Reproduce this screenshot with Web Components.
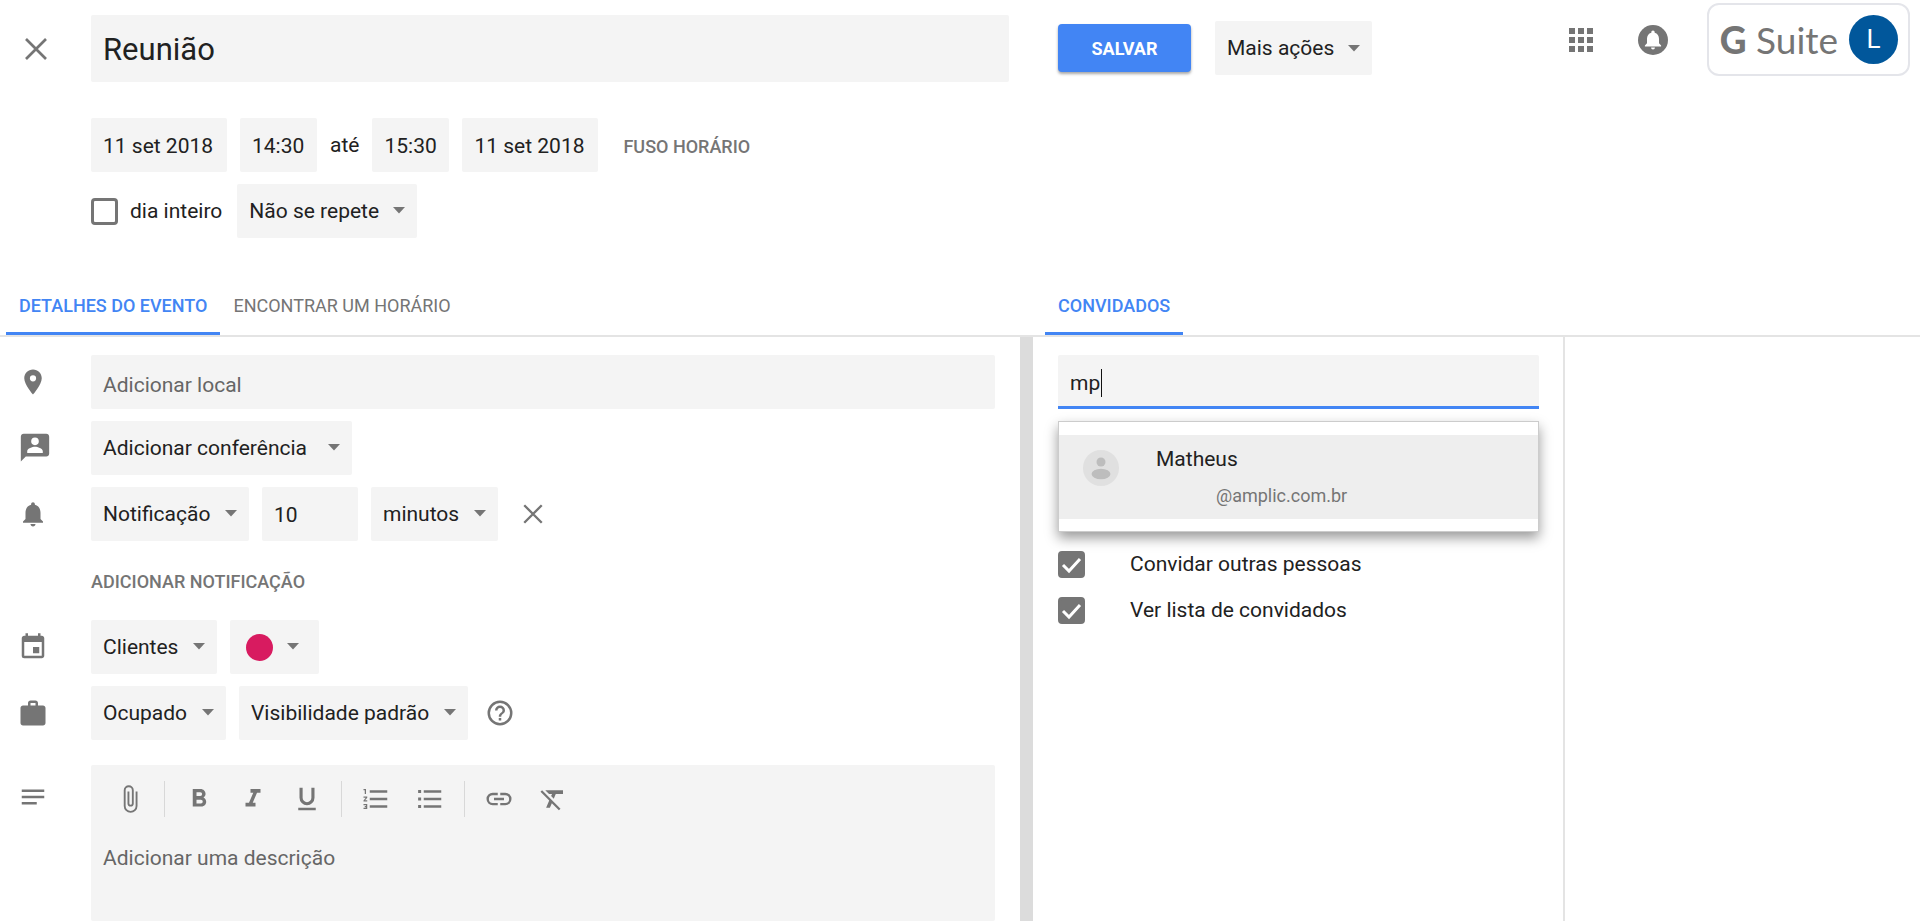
<!DOCTYPE html>
<html lang="pt-BR">
<head>
  <meta charset="UTF-8">
  <meta name="viewport" content="width=device-width, initial-scale=1.0">
  <title>Reunião</title>
  <style>
    :root {
      --blue: #4285f4;
      --field: #f4f4f4;
      --line: #e4e4e4;
      --gray: #757575;
      --ink: #212121;
    }
    body {
      margin: 0;
      background: #fff;
      color: var(--ink);
      font: 21px/28px Roboto, "Liberation Sans", sans-serif;
    }
  </style>
</head>
<body>
  <event-editor></event-editor>

  <template id="header-template">
    <style>
      :host { display: grid; grid-template-columns: 17fr 15fr; align-items: start; }
      .title { display: flex; align-items: center; padding: 15px 11px 0 20px; }
      .title cal-field { flex: 1; margin-left: 39px; --height: 67px; --size: 31px; }
      .right { display: flex; align-items: flex-start; padding: 3px 10px 0 38px; }
      .actions { display: flex; align-items: center; gap: 24px; padding-top: 18px; }
      .save {
        width: 133px; height: 48px; border: 0; border-radius: 4px; padding: 2px 0 0;
        background: var(--blue); color: #fff;
        font: 700 18px/24px Roboto, sans-serif;
        box-shadow: 0 2px 3px rgba(0, 0, 0, .35);
      }
      .more {
        display: flex; align-items: center; gap: 14px; height: 54px; padding: 0 12px;
        border: 0; border-radius: 2px; background: var(--field); color: inherit; font: inherit;
      }
      .account { display: flex; align-items: center; margin-left: auto; }
      .badge {
        display: flex; align-items: center; gap: 11px; box-sizing: border-box;
        height: 73px; margin-left: 36px; padding: 0 10px 0 11px;
        border: 2px solid #e4e5ea; border-radius: 12px;
      }
      .brand { color: var(--gray); font: 37px/44px Lato, sans-serif; white-space: nowrap; }
      .brand b { font-weight: 900; }
      .user {
        width: 49px; height: 49px; border: 0; border-radius: 50%; padding: 0;
        background: #01579b; color: #fff; font: 26px/49px Roboto, sans-serif;
      }
      .bell { margin-left: 36px; }
    </style>
    <div class="title">
      <icon-button icon="close" label="Fechar" style="--icon: 32px"></icon-button>
      <cal-field label="Título" value="Reunião"></cal-field>
    </div>
    <div class="right">
      <div class="actions">
        <button class="save">SALVAR</button>
        <button class="more">Mais ações <cal-icon name="arrow" style="--icon: 12px"></cal-icon></button>
      </div>
      <div class="account">
        <icon-button icon="apps" label="Apps" style="--icon: 36px"></icon-button>
        <icon-button class="bell" icon="alerts" label="Alertas" style="--icon: 36px"></icon-button>
        <div class="badge">
          <span class="brand"><b>G</b> Suite</span>
          <button class="user" aria-label="Conta">L</button>
        </div>
      </div>
    </div>
  </template>

  <template id="when-template">
    <style>
      :host { display: flex; flex-direction: column; gap: 12px; padding: 36px 0 40px 91px; }
      .row { display: flex; align-items: center; gap: 13px; }
      .repeat { gap: 15px; }
      .date { width: 136px; }
      .time { width: 77px; }
      text-button { margin-left: 12px; }
    </style>
    <div class="row">
      <cal-field class="date" label="Data de início" value="11 set 2018"></cal-field>
      <cal-field class="time" label="Hora de início" value="14:30"></cal-field>
      <span>até</span>
      <cal-field class="time" label="Hora de término" value="15:30"></cal-field>
      <cal-field class="date" label="Data de término" value="11 set 2018"></cal-field>
      <text-button>FUSO HORÁRIO</text-button>
    </div>
    <div class="row repeat">
      <cal-check>dia inteiro</cal-check>
      <cal-select label="Repetição" value="Não se repete"></cal-select>
    </div>
  </template>

  <template id="details-template">
    <style>
      :host { display: flex; flex-direction: column; gap: 12px; box-sizing: border-box; padding: 18px 25px 0 18px; }
      .row { display: grid; grid-template-columns: 30px 1fr; column-gap: 43px; align-items: center; min-height: 54px; }
      .row > div { display: flex; align-items: center; gap: 13px; }
      cal-field { flex: 1; }
      cal-field.place { --drop: 6px; }
      cal-field.count { flex: none; width: 96px; }
      .add { min-height: 55px; }
      .add text-button { grid-column: 2; }
      .description { flex: 1; align-items: stretch; margin-top: 13px; }
      .description > cal-icon { margin-top: 17px; }
      .remove { margin-left: 8px; }
    </style>
    <div class="row">
      <cal-icon name="place"></cal-icon>
      <cal-field class="place" label="Local" placeholder="Adicionar local"></cal-field>
    </div>
    <div class="row">
      <cal-icon name="person" style="--icon: 34px"></cal-icon>
      <div><cal-select label="Conferência" value="Adicionar conferência" style="--gap: 20px"></cal-select></div>
    </div>
    <div class="row">
      <cal-icon name="bell"></cal-icon>
      <div>
        <cal-select label="Tipo de aviso" value="Notificação"></cal-select>
        <cal-field class="count" label="Quantidade" value="10"></cal-field>
        <cal-select label="Unidade" value="minutos"></cal-select>
        <icon-button class="remove" icon="close" label="Remover notificação" style="--icon: 28px"></icon-button>
      </div>
    </div>
    <div class="row add"><text-button>ADICIONAR NOTIFICAÇÃO</text-button></div>
    <div class="row">
      <cal-icon name="calendar"></cal-icon>
      <div>
        <cal-select label="Agenda" value="Clientes"></cal-select>
        <color-picker></color-picker>
      </div>
    </div>
    <div class="row">
      <cal-icon name="bag"></cal-icon>
      <div>
        <cal-select label="Disponibilidade" value="Ocupado"></cal-select>
        <cal-select label="Visibilidade" value="Visibilidade padrão"></cal-select>
        <icon-button icon="help" label="Ajuda" style="--icon: 30px; margin-left: 4px"></icon-button>
      </div>
    </div>
    <div class="row description">
      <cal-icon name="notes"></cal-icon>
      <rich-editor></rich-editor>
    </div>
  </template>

  <template id="editor-template">
    <style>
      :host { display: flex; flex-direction: column; flex: 1; background: var(--field); border-radius: 2px; }
      .tools { display: flex; align-items: center; height: 68px; padding-left: 12px; }
      icon-button { width: 54px; }
      hr { width: 1px; height: 36px; margin: 0 7px; border: 0; background: #d8d8d8; }
      textarea {
        flex: 1; min-height: 40px; padding: 11px 12px; border: 0; outline: 0; resize: none;
        background: none; color: inherit; font: inherit; overflow: hidden;
      }
      textarea::placeholder { color: #666; }
    </style>
    <div class="tools" role="toolbar" aria-label="Formatação">
      <icon-button icon="clip" label="Anexar"></icon-button>
      <hr>
      <icon-button icon="bold" label="Negrito"></icon-button>
      <icon-button icon="italic" label="Itálico"></icon-button>
      <icon-button icon="underline" label="Sublinhado"></icon-button>
      <hr>
      <icon-button icon="numbers" label="Lista numerada"></icon-button>
      <icon-button icon="bullets" label="Lista com marcadores"></icon-button>
      <hr>
      <icon-button icon="link" label="Link"></icon-button>
      <icon-button icon="clear" label="Remover formatação"></icon-button>
    </div>
    <textarea aria-label="Descrição" placeholder="Adicionar uma descrição"></textarea>
  </template>

  <template id="guests-template">
    <style>
      :host { display: block; box-sizing: border-box; padding: 18px 24px 0 25px; border-right: 2px solid var(--line); }
      .search { position: relative; }
      input {
        display: block; box-sizing: border-box; width: 100%; height: 54px; padding: 4px 12px 0;
        border: 0; border-bottom: 3px solid var(--blue); border-radius: 2px 2px 0 0; outline: 0;
        background: var(--field); color: inherit; font: inherit; caret-color: transparent;
      }
      .caret { position: absolute; left: 43px; top: 14px; width: 1px; height: 28px; background: #111; }
      ul {
        margin: 12px 0 0; padding: 13px 0 12px; list-style: none;
        border: 1px solid #ccc; background: #fff; box-shadow: 0 6px 12px rgba(0, 0, 0, .4);
      }
      li { display: flex; gap: 37px; height: 84px; padding: 0 24px; background: #eee; }
      li cal-icon { --icon: 36px; align-self: flex-start; margin-top: 15px; }
      p { margin: 10px 0 0; }
      .mail { margin-top: 9px; padding-left: 60px; color: var(--gray); font-size: 18px; }
      .options { display: flex; flex-direction: column; gap: 18px; margin-top: 18px; }
      cal-check { --gap: 45px; }
    </style>
    <div class="search">
      <input aria-label="Adicionar convidados" value="mp">
      <span class="caret"></span>
    </div>
    <ul>
      <li>
        <cal-icon name="avatar"></cal-icon>
        <div>
          <p>Matheus</p>
          <p class="mail">@amplic.com.br</p>
        </div>
      </li>
    </ul>
    <div class="options">
      <cal-check checked>Convidar outras pessoas</cal-check>
      <cal-check checked>Ver lista de convidados</cal-check>
    </div>
  </template>

  <template id="page-template">
    <style>
      :host { display: flex; flex-direction: column; min-height: 100vh; }
      .tabs { display: grid; grid-template-columns: 17fr 15fr; border-bottom: 2px solid var(--line); }
      .tabs div { display: flex; padding-left: 6px; }
      .tabs .guests { padding-left: 25px; }
      .body { flex: 1; display: grid; grid-template-columns: 17fr 15fr; }
      .side { display: grid; grid-template-columns: 3fr 2fr; border-left: 13px solid #dcdcdc; }
    </style>
    <event-header></event-header>
    <event-when></event-when>
    <div class="tabs">
      <div role="tablist">
        <cal-tab selected>DETALHES DO EVENTO</cal-tab>
        <cal-tab>ENCONTRAR UM HORÁRIO</cal-tab>
      </div>
      <div class="guests" role="tablist"><cal-tab selected>CONVIDADOS</cal-tab></div>
    </div>
    <div class="body">
      <event-details></event-details>
      <div class="side"><guest-panel></guest-panel></div>
    </div>
  </template>

  <script>
    // every icon is drawn on a 24x24 grid
    const icons = {
      close: '<path d="M4.5 4.5l15 15m0-15l-15 15" fill="none" stroke="currentColor" stroke-width="2"/>',
      arrow: '<path d="M0 6h24L12 19z"/>',
      apps: '<path d="M4 4h4v4H4zm6 0h4v4h-4zm6 0h4v4h-4zM4 10h4v4H4zm6 0h4v4h-4zm6 0h4v4h-4zM4 16h4v4H4zm6 0h4v4h-4zm6 0h4v4h-4z"/>',
      alerts: '<circle cx="12" cy="12" r="10"/><path fill="#fff" d="M12 5.6c-.7 0-1.1.5-1.1 1.1v.4C9 7.600 8 9.200 8 11.200v3L6.600 15.600v.7h10.800v-.7L16 14.200v-3c0-2-1-3.600-2.900-4.100v-.4c0-.6-.4-1.100-1.100-1.100zM10.700 17a1.300 1.300 0 0 0 2.600 0z"/>',
      place: '<path d="M12 2C8.130 2 5 5.130 5 9c0 5.250 7 13 7 13s7-7.750 7-13c0-3.870-3.130-7-7-7zm0 9.500a2.500 2.500 0 0 1 0-5 2.500 2.500 0 0 1 0 5z"/>',
      person: '<path d="M20 2H4c-1.100 0-2 .9-2 2v17.500L5.500 18H20c1.100 0 2-.9 2-2V4c0-1.100-.9-2-2-2zm-8 2.600a2.700 2.700 0 1 1 0 5.400 2.700 2.700 0 0 1 0-5.400zM17.500 15.500h-11v-1.200c0-2 3.700-3.100 5.500-3.100s5.500 1.100 5.500 3.100z"/>',
      bell: '<path d="M12 22c1.100 0 2-.9 2-2h-4c0 1.100.9 2 2 2zm6-6v-5c0-3.070-1.640-5.640-4.500-6.320V4c0-.83-.67-1.500-1.500-1.500s-1.500.67-1.500 1.500v.68C7.630 5.360 6 7.920 6 11v5l-2 2v1h16v-1z"/>',
      calendar: '<path d="M17 12h-5v5h5zM16 1v2H8V1H6v2H5c-1.110 0-2 .9-2 2v14a2 2 0 0 0 2 2h14c1.100 0 2-.9 2-2V5c0-1.100-.9-2-2-2h-1V1zm3 18H5V8h14z"/>',
      bag: '<path d="M20 6h-4V4c0-1.110-.89-2-2-2h-4c-1.110 0-2 .89-2 2v2H4c-1.110 0-2 .89-2 2v12c0 1.110.89 2 2 2h16c1.110 0 2-.89 2-2V8c0-1.110-.89-2-2-2zm-6 0h-4V4h4z"/>',
      notes: '<path d="M3 6h18v2H3zm0 5h18v2H3zM3 16h12v2H3z"/>',
      help: '<path d="M11 18h2v-2h-2zm1-16a10 10 0 1 0 0 20 10 10 0 0 0 0-20zm0 18a8 8 0 1 1 0-16 8 8 0 0 1 0 16zm0-14a4 4 0 0 0-4 4h2a2 2 0 1 1 4 0c0 2-3 1.750-3 5h2c0-2.250 3-2.500 3-5a4 4 0 0 0-4-4z"/>',
      clip: '<path d="M16.500 6v11.500a4 4 0 0 1-8 0V5a2.500 2.500 0 0 1 5 0v10.500a1 1 0 0 1-2 0V6H10v9.500a2.500 2.500 0 0 0 5 0V5a4 4 0 0 0-8 0v12.500a5.500 5.500 0 0 0 11 0V6z"/>',
      bold: '<path d="M15.600 10.790c.97-.67 1.650-1.770 1.650-2.790 0-2.260-1.750-4-4-4H7v14h7.040c2.090 0 3.710-1.700 3.710-3.790 0-1.520-.86-2.820-2.150-3.420zM10 6.500h3a1.500 1.500 0 0 1 0 3h-3zm3.500 9H10v-3h3.500a1.500 1.500 0 0 1 0 3z"/>',
      italic: '<path d="M10 4v3h2.210l-3.420 8H6v3h8v-3h-2.210l3.420-8H18V4z"/>',
      underline: '<path d="M12 17a6 6 0 0 0 6-6V3h-2.500v8a3.500 3.500 0 0 1-7 0V3H6v8a6 6 0 0 0 6 6zm-7 2v2h14v-2z"/>',
      numbers: '<path d="M2 17h2v.5H3v1h1v.5H2v1h3v-4H2zm1-9h1V4H2v1h1zm-1 3h1.800L2 13.100v.9h3v-1H3.200L5 10.900V10H2zm5-6v2h14V5zm0 14h14v-2H7zm0-6h14v-2H7z"/>',
      bullets: '<path d="M2.500 4.800h2.400v2.400H2.500zm0 6h2.400v2.400H2.500zm0 6h2.400v2.400H2.500zM7 19h14v-2H7zm0-6h14v-2H7zm0-8v2h14V5z"/>',
      link: '<path d="M3.900 12A3.100 3.100 0 0 1 7 8.900h4V7H7a5 5 0 0 0 0 10h4v-1.900H7A3.100 3.100 0 0 1 3.900 12zM8 13h8v-2H8zm9-6h-4v1.900h4a3.100 3.100 0 0 1 0 6.200h-4V17h4a5 5 0 0 0 0-10z"/>',
      clear: '<path d="M3.270 5L2 6.270l6.970 6.970L6.500 19h3l1.570-3.660L16.730 21 18 19.730zM6 5v.18L8.820 8h2.400l-.72 1.680 2.100 2.100L14.210 8H20V5z"/>',
      avatar: '<circle cx="12" cy="12" r="12" fill="#e0e0e0"/><circle cx="12" cy="8" r="3" fill="#bdbdbd"/><ellipse cx="12" cy="16" rx="6.300" ry="3.500" fill="#bdbdbd"/>'
    };

    // element whose content comes from a template in the page
    const fromTemplate = (tag, id) => customElements.define(tag, class extends HTMLElement {
      connectedCallback() {
        if (this.shadowRoot) return;
        this.attachShadow({mode: 'open'});
        this.shadowRoot.appendChild(document.getElementById(id).content.cloneNode(true));
      }
    });

    class CalIcon extends HTMLElement {
      connectedCallback() {
        if (this.shadowRoot) return;
        this.attachShadow({mode: 'open'});
        this.shadowRoot.innerHTML = `<style>
          :host { display: inline-flex; color: var(--gray); }
          svg { flex: none; width: var(--icon, 30px); height: var(--icon, 30px); fill: currentColor; }
        </style>
        <svg viewBox="0 0 24 24" aria-hidden="true">${icons[this.getAttribute('name')]}</svg>`;
      }
    }

    class IconButton extends HTMLElement {
      connectedCallback() {
        if (this.shadowRoot) return;
        this.attachShadow({mode: 'open'});
        this.shadowRoot.innerHTML = `<style>
          :host { display: inline-flex; justify-content: center; }
          button { display: flex; padding: 0; border: 0; background: none; cursor: pointer; }
        </style>
        <button aria-label="${this.getAttribute('label')}"><cal-icon name="${this.getAttribute('icon')}"></cal-icon></button>`;
      }
    }

    class TextButton extends HTMLElement {
      connectedCallback() {
        if (this.shadowRoot) return;
        this.attachShadow({mode: 'open'});
        this.shadowRoot.innerHTML = `<style>
          :host { display: inline-flex; }
          button { padding: 3px 0 0; border: 0; background: none; color: var(--gray); font: 500 18px/28px Roboto, sans-serif; }
        </style>
        <button><slot></slot></button>`;
      }
    }

    class CalField extends HTMLElement {
      connectedCallback() {
        if (this.shadowRoot) return;
        this.attachShadow({mode: 'open'});
        this.shadowRoot.innerHTML = `<style>
          :host { display: block; }
          input {
            display: block; box-sizing: border-box; width: 100%; height: var(--height, 54px);
            padding: var(--drop, 2px) 12px 0; border: 0; border-radius: 2px; outline: 0;
            background: var(--field); color: inherit; font: inherit; font-size: var(--size, 21px);
          }
          input::placeholder { color: #666; }
        </style>
        <input aria-label="${this.getAttribute('label')}" value="${this.getAttribute('value') || ''}"
          placeholder="${this.getAttribute('placeholder') || ''}">`;
      }
    }

    class CalSelect extends HTMLElement {
      connectedCallback() {
        if (this.shadowRoot) return;
        this.attachShadow({mode: 'open'});
        // select and arrow share one grid cell
        this.shadowRoot.innerHTML = `<style>
          :host { display: inline-grid; align-items: center; }
          select, cal-icon { grid-area: 1 / 1; }
          select {
            appearance: none; height: 54px; border: 0; border-radius: 2px; outline: 0;
            padding: 0 calc(24px + var(--gap, 14px)) 0 12px;
            background: var(--field); color: inherit; font: inherit;
          }
          cal-icon { --icon: 12px; justify-self: end; margin: 0 12px 2px 0; pointer-events: none; }
        </style>
        <select aria-label="${this.getAttribute('label')}"><option>${this.getAttribute('value')}</option></select>
        <cal-icon name="arrow"></cal-icon>`;
      }
    }

    class ColorPicker extends HTMLElement {
      connectedCallback() {
        if (this.shadowRoot) return;
        this.attachShadow({mode: 'open'});
        this.shadowRoot.innerHTML = `<style>
          :host { display: inline-flex; }
          button {
            display: flex; align-items: center; gap: 14px; height: 54px; padding: 0 20px 0 16px;
            border: 0; border-radius: 2px; background: var(--field);
          }
          span { width: 27px; height: 27px; border-radius: 50%; background: #d81b60; }
          cal-icon { --icon: 12px; margin-bottom: 2px; }
        </style>
        <button aria-label="Cor do evento"><span></span><cal-icon name="arrow"></cal-icon></button>`;
      }
    }

    class CalCheck extends HTMLElement {
      connectedCallback() {
        if (this.shadowRoot) return;
        this.attachShadow({mode: 'open'});
        this.shadowRoot.innerHTML = `<style>
          :host { display: block; }
          label { display: flex; align-items: center; gap: var(--gap, 12px); }
          .box { display: grid; }
          input, svg { grid-area: 1 / 1; width: 27px; height: 27px; margin: 0; box-sizing: border-box; }
          input { appearance: none; border: 3px solid var(--gray); border-radius: 4px; }
          input:checked { background: var(--gray); }
          svg { display: none; fill: none; stroke: #fff; stroke-width: 3; pointer-events: none; }
          input:checked + svg { display: block; }
        </style>
        <label>
          <span class="box">
            <input type="checkbox" ${this.hasAttribute('checked') ? 'checked' : ''}>
            <svg viewBox="0 0 27 27"><path d="M5 14l6 6L22 8"/></svg>
          </span>
          <slot></slot>
        </label>`;
      }
    }

    class CalTab extends HTMLElement {
      connectedCallback() {
        if (this.shadowRoot) return;
        this.attachShadow({mode: 'open'});
        const selected = this.hasAttribute('selected');
        this.shadowRoot.innerHTML = `<style>
          :host { display: block; }
          button {
            height: 57px; padding: 2px 13px 0; border: 0; border-bottom: 3px solid transparent;
            background: none; color: var(--gray); font: 18px/28px Roboto, sans-serif;
          }
          :host([selected]) button { color: var(--blue); border-color: var(--blue); font-weight: 500; }
        </style>
        <button role="tab" aria-selected="${selected}"><slot></slot></button>`;
      }
    }

    customElements.define('cal-icon', CalIcon);
    customElements.define('icon-button', IconButton);
    customElements.define('text-button', TextButton);
    customElements.define('cal-field', CalField);
    customElements.define('cal-select', CalSelect);
    customElements.define('color-picker', ColorPicker);
    customElements.define('cal-check', CalCheck);
    customElements.define('cal-tab', CalTab);
    fromTemplate('rich-editor', 'editor-template');
    fromTemplate('event-header', 'header-template');
    fromTemplate('event-when', 'when-template');
    fromTemplate('event-details', 'details-template');
    fromTemplate('guest-panel', 'guests-template');
    fromTemplate('event-editor', 'page-template');
  </script>
</body>
</html>
